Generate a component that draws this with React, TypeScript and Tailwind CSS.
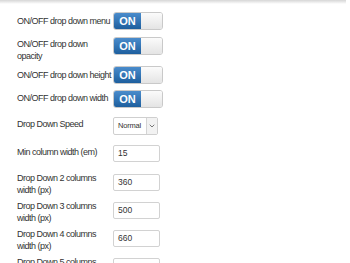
import { ChevronDown } from "lucide-react";

type Row = {
  label: string;
  h: string;
  labelMt: string;
  kind: "switch" | "select" | "input";
  value?: string;
};

const rows: Row[] = [
  { label: "ON/OFF drop down menu", h: "h-[25px]", labelMt: "mt-[3px]", kind: "switch" },
  { label: "ON/OFF drop down opacity", h: "h-[29px]", labelMt: "mt-[1px]", kind: "switch" },
  { label: "ON/OFF drop down height", h: "h-[24px]", labelMt: "mt-[3px]", kind: "switch" },
  { label: "ON/OFF drop down width", h: "h-[27px]", labelMt: "mt-[2px]", kind: "switch" },
  { label: "Drop Down Speed", h: "h-[28px]", labelMt: "mt-[1px]", kind: "select" },
  { label: "Min column width (em)", h: "h-[29px]", labelMt: "mt-[1px]", kind: "input", value: "15" },
  { label: "Drop Down 2 columns width (px)", h: "h-[28px]", labelMt: "-mt-[2px]", kind: "input", value: "360" },
  { label: "Drop Down 3 columns width (px)", h: "h-[28px]", labelMt: "-mt-[2px]", kind: "input", value: "500" },
  { label: "Drop Down 4 columns width (px)", h: "h-[28px]", labelMt: "-mt-[2px]", kind: "input", value: "660" },
  { label: "Drop Down 5 columns width (px)", h: "h-[28px]", labelMt: "-mt-[2px]", kind: "input", value: "820" },
];

function Toggle() {
  return (
    <div className="flex h-[18px] w-[50px] overflow-hidden rounded-[3px] border border-[#c9c9c9]">
      <div className="flex w-[27px] items-center justify-center bg-gradient-to-b from-[#4a8ccc] to-[#1d5f9e] text-[11px] font-bold text-white">
        ON
      </div>
      <div className="flex-1 bg-gradient-to-b from-[#fbfbfb] to-[#e4e4e4]" />
    </div>
  );
}

function Speed() {
  return (
    <div className="flex h-[18px] w-[45px] items-center rounded-[2px] border border-[#cfcfcf] bg-white">
      <span className="flex-1 pl-[4px] text-[7.5px] tracking-[-0.2px] text-[#333]">Normal</span>
      <span className="flex h-full w-[11px] items-center justify-center border-l border-[#d4d4d4] bg-[#f2f2f2]">
        <ChevronDown size={8} strokeWidth={3} className="text-[#777]" />
      </span>
    </div>
  );
}

function Field({ value }: { value?: string }) {
  return (
    <div className="flex h-[17px] w-[47px] items-center rounded-[2px] border border-[#d2d2d2] bg-white pl-[4px] text-[8.5px] text-[#333]">
      {value}
    </div>
  );
}

export default function App() {
  return (
    <div className="h-[263px] w-[350px] overflow-hidden bg-white font-['Liberation_Sans',Arial,sans-serif]">
      <div className="h-[4px] w-[346px] bg-gradient-to-b from-[#d6d6d6] to-white" />
      <div className="mt-[8px] flex flex-col">
        {rows.map((r) => (
          <div key={r.label} className={`flex shrink-0 items-start ${r.h}`}>
            <div className={`box-content w-[96px] pl-[17px] text-[9px] leading-[12px] tracking-[-0.5px] text-[#333] ${r.labelMt}`}>
              {r.label}
            </div>
            <div>
              {r.kind === "switch" && <Toggle />}
              {r.kind === "select" && <Speed />}
              {r.kind === "input" && <Field value={r.value} />}
            </div>
          </div>
        ))}
      </div>
    </div>
  );
}
